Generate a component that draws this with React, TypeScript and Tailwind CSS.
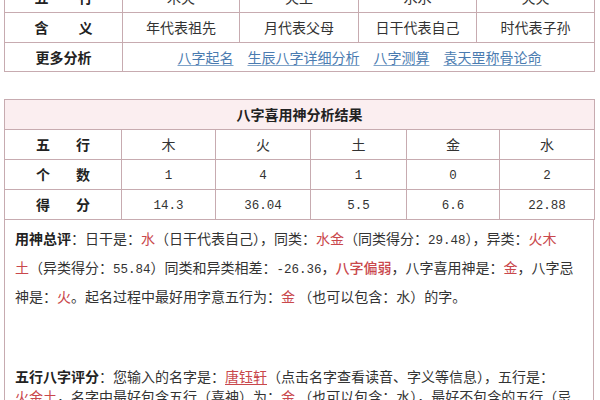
const CJK = "font-['Noto_Sans_CJK_SC',sans-serif]";
const LINE = "border border-[#c7abb0]";

const PILLAR_MEANING = ["年代表祖先", "月代表父母", "日干代表自己", "时代表子孙"];
const PILLAR_WUXING = ["木火", "火土", "水水", "火火"];
const LINKS = ["八字起名", "生辰八字详细分析", "八字测算", "袁天罡称骨论命"];

const ELEMENTS = ["木", "火", "土", "金", "水"];
const COUNTS = ["1", "4", "1", "0", "2"];
const SCORES = ["14.3", "36.04", "5.5", "6.6", "22.88"];

function Num({ children }: { children: string }) {
  return <span className="font-['Liberation_Mono',monospace] text-[12.5px]">{children}</span>;
}

function Red({ children, bold }: { children: React.ReactNode; bold?: boolean }) {
  return <span className={`text-[#c9484c] ${bold ? "font-medium" : ""}`}>{children}</span>;
}

function Label({ a, b, gap }: { a: string; b: string; gap: string }) {
  return (
    <div className={`flex justify-center font-bold text-[#222] ${gap}`}>
      <span>{a}</span>
      <span>{b}</span>
    </div>
  );
}

export default function App() {
  return (
    <div className={`h-[400px] w-[600px] overflow-hidden bg-white pl-[4px] text-[14px] text-[#333] ${CJK}`}>
      {/* 四柱表，顶部被截 */}
      <div className="h-[72px] overflow-hidden">
        <table className="-mt-[18px] w-[590px] table-fixed border-collapse">
          <colgroup>
            <col className="w-[118px]" />
            <col className="w-[117px]" />
            <col className="w-[119px]" />
            <col className="w-[118px]" />
            <col className="w-[118px]" />
          </colgroup>
          <tbody>
            <tr className="h-[30px]">
              <td className={LINE}>
                <Label a="五" b="行" gap="gap-[30px]" />
              </td>
              {PILLAR_WUXING.map((w, i) => (
                <td key={i} className={`${LINE} text-center`}>{w}</td>
              ))}
            </tr>
            <tr className="h-[30px]">
              <td className={LINE}>
                <Label a="含" b="义" gap="gap-[30px]" />
              </td>
              {PILLAR_MEANING.map((m, i) => (
                <td key={i} className={`${LINE} text-center`}>{m}</td>
              ))}
            </tr>
            <tr className="h-[29px]">
              <td className={`${LINE} text-center font-bold text-[#222]`}>更多分析</td>
              <td colSpan={4} className={LINE}>
                <div className="flex justify-center gap-[14px] pl-[2px]">
                  {LINKS.map((l) => (
                    <a key={l} href="#" className="text-[#4a7bb0] underline decoration-[#7fa3c8] underline-offset-2">
                      {l}
                    </a>
                  ))}
                </div>
              </td>
            </tr>
          </tbody>
        </table>
      </div>

      {/* 喜用神分析 */}
      <table className="mt-[27px] w-[590px] table-fixed border-collapse">
        <colgroup>
          <col className="w-[117px]" />
          <col className="w-[94px]" />
          <col className="w-[95px]" />
          <col className="w-[96px]" />
          <col className="w-[93px]" />
          <col className="w-[95px]" />
        </colgroup>
        <tbody>
          <tr className="h-[30px] bg-[#fbeef0]">
            <td colSpan={6} className={`${LINE} text-center font-bold text-[#222]`}>
              八字喜用神分析结果
            </td>
          </tr>
          <tr className="h-[30px]">
            <td className={LINE}>
              <Label a="五" b="行" gap="gap-[26px]" />
            </td>
            {ELEMENTS.map((e) => (
              <td key={e} className={`${LINE} text-center`}>{e}</td>
            ))}
          </tr>
          <tr className="h-[30px]">
            <td className={LINE}>
              <Label a="个" b="数" gap="gap-[26px]" />
            </td>
            {COUNTS.map((c, i) => (
              <td key={i} className={`${LINE} text-center`}>
                <Num>{c}</Num>
              </td>
            ))}
          </tr>
          <tr className="h-[30px]">
            <td className={LINE}>
              <Label a="得" b="分" gap="gap-[26px]" />
            </td>
            {SCORES.map((s, i) => (
              <td key={i} className={`${LINE} text-center`}>
                <Num>{s}</Num>
              </td>
            ))}
          </tr>
        </tbody>
      </table>

      <div className="h-[200px] w-[590px] border-x border-[#c7abb0] pl-[10px] pt-[5px]">
        <div className="whitespace-nowrap leading-[26px]">
          <div>
            <span className="font-bold text-[#222]">用神总评</span>：日干是：<Red>水</Red>（日干代表自己），同类：
            <Red>水金</Red>（同类得分：<Num>29.48</Num>），异类：<Red>火木</Red>
          </div>
          <div>
            <Red>土</Red>（异类得分：<Num>55.84</Num>）同类和异类相差：<Num>-26.36</Num>，<Red bold>八字偏弱</Red>
            ，八字喜用神是：<Red>金</Red>，八字忌
          </div>
          <div>
            神是：<Red>火</Red>。起名过程中最好用字意五行为：<Red>金</Red> （也可以包含：水）的字。
          </div>
        </div>

        <div className="mt-[57px] whitespace-nowrap leading-[20px]">
          <div>
            <span className="font-bold text-[#222]">五行八字评分</span>：您输入的名字是：
            <a href="#" className="text-[#c9484c] underline underline-offset-2">唐钰轩</a>
            （点击名字查看读音、字义等信息），五行是：
          </div>
          <div>
            <Red>火金土</Red>，名字中最好包含五行（喜神）为：<Red>金</Red> （也可以包含：水），最好不包含的五行（忌
          </div>
        </div>
      </div>
    </div>
  );
}
